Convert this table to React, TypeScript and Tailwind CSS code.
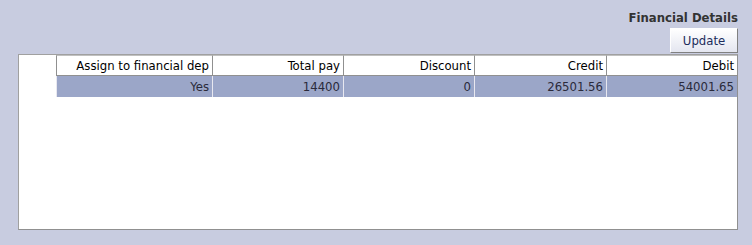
const columns = [
  { label: 'Assign to financial dep', value: 'Yes', width: 'w-[156px]' },
  { label: 'Total pay', value: '14400', width: 'w-[131px]' },
  { label: 'Discount', value: '0', width: 'w-[131px]' },
  { label: 'Credit', value: '26501.56', width: 'w-[132px]' },
  { label: 'Debit', value: '54001.65', width: 'w-[131px]' },
];

export default function App() {
  return (
    <div
      className="w-[752px] h-[245px] bg-[#c8cce0] text-[13px] overflow-hidden"
      style={{ fontFamily: 'Tahoma, "DejaVu Sans Condensed", "Liberation Sans", sans-serif' }}
    >
      <div className="flex flex-col items-end pr-[14px] pt-[10px]">
        <div className="font-bold text-[#333333] leading-[16px]">Financial Details</div>
        <button className="mt-[2px] w-[68px] h-[25px] bg-gradient-to-b from-white to-[#e4e6f0] border border-t-white border-l-white border-r-[#808080] border-b-[#808080] text-[#1c2c5c] leading-[22px]">
          Update
        </button>
      </div>
      <div className="ml-[18px] mt-[1px] w-[720px] h-[176px] bg-white border border-t-[#a0a0a0] border-l-[#a0a0a0] border-r-[#909090] border-b-[#909090]">
        <div className="pl-[37px]">
          <div className="flex">
            {columns.map((c) => (
              <div
                key={c.label}
                className={`${c.width} h-[21px] border-l border-t border-b border-l-[#909090] border-t-[#c0c0c0] border-b-[#909090] bg-white text-right pr-[3px] leading-[19px] text-black`}
              >
                {c.label}
              </div>
            ))}
          </div>
          <div className="flex">
            {columns.map((c) => (
              <div
                key={c.label}
                className={`${c.width} h-[21px] border-l border-l-[#e8e8f0] bg-[#9ba6c8] text-right pr-[3px] leading-[21px] text-[#2a2a3a]`}
              >
                {c.value}
              </div>
            ))}
          </div>
        </div>
      </div>
    </div>
  );
}
